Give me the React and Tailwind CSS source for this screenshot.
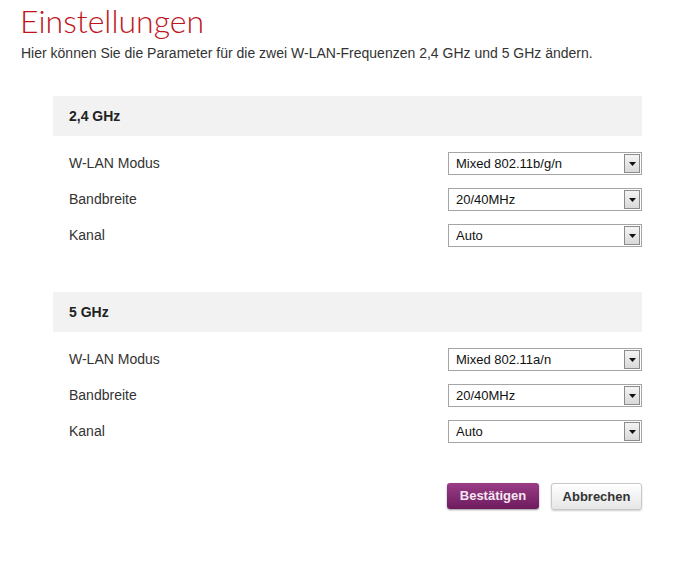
import React from 'react'

const sections = [
  {
    title: '2,4 GHz',
    rows: [
      ['W-LAN Modus', 'Mixed 802.11b/g/n'],
      ['Bandbreite', '20/40MHz'],
      ['Kanal', 'Auto'],
    ],
  },
  {
    title: '5 GHz',
    rows: [
      ['W-LAN Modus', 'Mixed 802.11a/n'],
      ['Bandbreite', '20/40MHz'],
      ['Kanal', 'Auto'],
    ],
  },
]

function FakeSelect({ value }) {
  return (
    <div className="flex h-[23px] w-[194px] border border-[#a5a5a5] bg-white">
      <span className="flex-1 pl-[7px] text-[13px] leading-[22px] text-[#111]">{value}</span>
      <span className="m-[1px] flex w-[16px] items-center justify-center border border-[#8a8a8a] bg-gradient-to-b from-[#f4f4f4] to-[#d9d9d9]">
        <svg width="7" height="4" viewBox="0 0 7 4">
          <path d="M0 0h7L3.5 4z" fill="#111" />
        </svg>
      </span>
    </div>
  )
}

export default function App() {
  return (
    <div className="h-[562px] w-[675px] bg-white font-['Liberation_Sans',Arial,sans-serif]">
      <h1 className="pl-[20px] font-['Lato',sans-serif] text-[32px] font-light leading-[42px] text-[#bf141c]">
        Einstellungen
      </h1>
      <p className="mt-[3px] pl-[21px] text-[14px] leading-[16px] text-[#333]">
        Hier können Sie die Parameter für die zwei W-LAN-Frequenzen 2,4 GHz und 5 GHz ändern.
      </p>

      <div className="ml-[53px] mt-[35px] w-[589px]">
        {sections.map((s, i) => (
          <div key={s.title} className={i > 0 ? 'mt-[45px]' : ''}>
            <div className="flex h-[40px] items-center bg-[#f2f2f2] pl-[16px] text-[14px] font-bold text-[#222]">
              {s.title}
            </div>
            <div className="mt-[16px] flex flex-col gap-[13px]">
              {s.rows.map(([label, value]) => (
                <div key={label} className="flex items-center justify-between pl-[16px]">
                  <span className="text-[14px] text-[#333]">{label}</span>
                  <FakeSelect value={value} />
                </div>
              ))}
            </div>
          </div>
        ))}

        <div className="mt-[40px] flex justify-end gap-[12px]">
          <button className="h-[26px] w-[92px] rounded-[3px] bg-gradient-to-b from-[#9a3d87] to-[#6e1b5e] text-[13px] font-bold text-[#f6e6f2] shadow-[0_1px_2px_rgba(0,0,0,0.4)]">
            Bestätigen
          </button>
          <button className="h-[27px] w-[91px] rounded-[3px] border border-[#c8c8c8] bg-gradient-to-b from-[#ffffff] to-[#e6e6e6] text-[13px] font-bold text-[#333] shadow-[0_1px_2px_rgba(0,0,0,0.2)]">
            Abbrechen
          </button>
        </div>
      </div>
    </div>
  )
}
